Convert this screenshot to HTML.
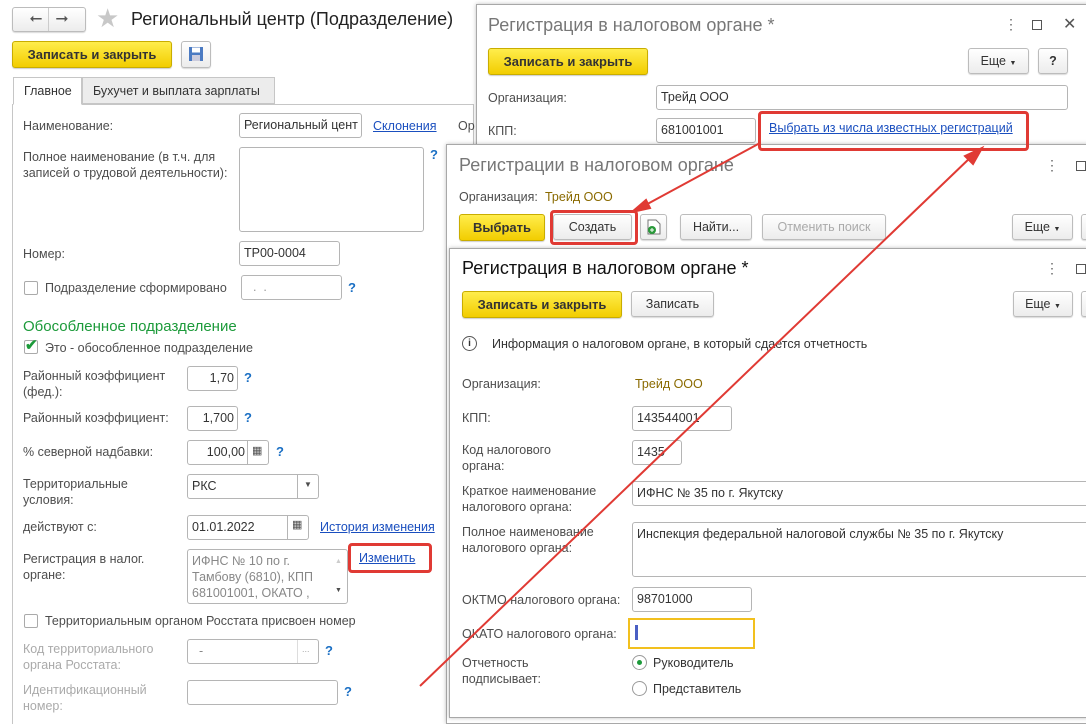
<!DOCTYPE html>
<html><head><meta charset="utf-8"><style>
*{box-sizing:border-box;margin:0;padding:0}
body{width:1086px;height:713px;overflow:hidden;background:#fff;position:relative;font-family:"Liberation Sans",Arial,sans-serif;font-size:12.5px;color:#4d4d4d}
div,span,a{position:absolute;white-space:nowrap}
.f{border:1px solid #b5b5b5;border-radius:3px;background:#fff;color:#333;padding:0 0 0 4px;height:25px;line-height:23px}
.b{border:1px solid #bcbcbc;border-radius:3px;background:linear-gradient(#fff,#ececec);color:#333;text-align:center;height:26px;line-height:24px;box-shadow:0 1px 1px rgba(0,0,0,.15)}
.y{border:1px solid #c9ad00;border-radius:3px;background:linear-gradient(#ffed4c,#f2cd00);color:#333;font-weight:bold;text-align:center;height:27px;line-height:25px;box-shadow:0 1px 1px rgba(0,0,0,.2)}
.q{color:#1a6fc4;font-weight:bold;font-size:13px}
.l{color:#1a4fbf;text-decoration:underline}
.w{background:#fff;border:1px solid #a8a8a8;box-shadow:0 0 4px rgba(0,0,0,.25)}
.g{color:#aaa}
.cb{width:14px;height:14px;border:1px solid #aaa;border-radius:2px;background:#fff}
.rb{width:15px;height:15px;border:1px solid #999;border-radius:50%;background:#fff}
.red{border:3px solid #e03a34;border-radius:4px}
</style></head><body>

<!-- main window -->
<div class="b" style="left:12px;top:7px;width:74px;height:25px;font-size:16px;line-height:22px;color:#555">⭠&nbsp;&nbsp;&nbsp;⭢</div>
<div style="left:48px;top:8px;width:1px;height:23px;background:#ccc"></div>
<div style="left:96px;top:3px;font-size:26px;color:#c8c8c8">★</div>
<div style="left:131px;top:9px;font-size:18px;color:#222">Региональный центр (Подразделение)</div>
<div class="y" style="left:12px;top:41px;width:160px;font-size:13px">Записать и закрыть</div>
<div class="b" style="left:181px;top:41px;width:30px;height:27px"><svg width="16" height="16" viewBox="0 0 16 16" style="position:absolute;left:6px;top:4px"><rect x="1" y="1" width="14" height="14" fill="#4b7ac2"/><rect x="4" y="1.5" width="8" height="5" fill="#fff"/><rect x="4" y="9" width="8" height="6" fill="#ccd"/></svg></div>
<div style="left:12px;top:104px;width:462px;height:620px;border:1px solid #c6c6c6;border-bottom:none"></div>
<div style="left:13px;top:77px;width:69px;height:28px;border:1px solid #c6c6c6;border-bottom:1px solid #fff;background:#fff;padding:6px 0 0 10px;color:#333">Главное</div>
<div style="left:82px;top:77px;width:193px;height:27px;border:1px solid #c6c6c6;background:#ececec;padding:6px 0 0 10px;color:#333">Бухучет и выплата зарплаты</div>

<div style="left:23px;top:119px">Наименование:</div>
<div class="f" style="left:239px;top:113px;width:123px;overflow:hidden">Региональный цент</div>
<a class="l" style="left:373px;top:119px">Склонения</a>
<div style="left:458px;top:119px">Ор</div>
<div style="left:23px;top:149px;line-height:16px">Полное наименование (в т.ч. для<br>записей о трудовой деятельности):</div>
<div class="f" style="left:239px;top:147px;width:185px;height:85px"></div>
<div class="q" style="left:430px;top:147px">?</div>
<div style="left:23px;top:247px">Номер:</div>
<div class="f" style="left:239px;top:241px;width:101px">ТР00-0004</div>
<div class="cb" style="left:24px;top:281px"></div>
<div style="left:45px;top:281px">Подразделение сформировано</div>
<div class="f" style="left:241px;top:275px;width:101px;color:#999">&nbsp;&nbsp;.&nbsp;&nbsp;.</div>
<div class="q" style="left:348px;top:280px">?</div>

<div style="left:23px;top:318px;font-size:15px;color:#1c9a3a">Обособленное подразделение</div>
<div class="cb" style="left:24px;top:340px"></div>
<div style="left:25px;top:336px;color:#1c9a3a;font-size:15px;font-weight:bold">✔</div>
<div style="left:45px;top:341px">Это - обособленное подразделение</div>
<div style="left:23px;top:368px;line-height:16px">Районный коэффициент<br>(фед.):</div>
<div class="f" style="left:187px;top:366px;width:51px;text-align:right;padding-right:3px">1,70</div>
<div class="q" style="left:244px;top:370px">?</div>
<div style="left:23px;top:411px">Районный коэффициент:</div>
<div class="f" style="left:187px;top:406px;width:51px;text-align:right;padding-right:3px">1,700</div>
<div class="q" style="left:244px;top:410px">?</div>
<div style="left:23px;top:445px">% северной надбавки:</div>
<div class="f" style="left:187px;top:440px;width:82px;padding-right:23px;text-align:right">100,00</div>
<div style="left:247px;top:441px;width:1px;height:23px;background:#b5b5b5"></div>
<div style="left:252px;top:444px;font-size:11px">▦</div>
<div class="q" style="left:276px;top:444px">?</div>
<div style="left:23px;top:476px;line-height:16px">Территориальные<br>условия:</div>
<div class="f" style="left:187px;top:474px;width:132px">РКС</div>
<div style="left:297px;top:475px;width:1px;height:23px;background:#b5b5b5"></div>
<div style="left:304px;top:480px;font-size:8px">▼</div>
<div style="left:23px;top:520px">действуют с:</div>
<div class="f" style="left:187px;top:515px;width:122px">01.01.2022</div>
<div style="left:287px;top:516px;width:1px;height:23px;background:#b5b5b5"></div>
<div style="left:292px;top:518px;font-size:11px">▦</div>
<a class="l" style="left:320px;top:520px">История изменения</a>
<div style="left:23px;top:551px;line-height:16px">Регистрация в налог.<br>органе:</div>
<div class="f" style="left:187px;top:549px;width:161px;height:55px;line-height:16px;padding-top:3px;color:#888">ИФНС № 10 по г.<br>Тамбову (6810), КПП<br>681001001, ОКАТО ,</div>
<div style="left:335px;top:558px;font-size:7px;color:#ccc">▲</div>
<div style="left:335px;top:587px;font-size:7px">▼</div>
<a class="l" style="left:359px;top:551px">Изменить</a>
<div class="cb" style="left:24px;top:614px"></div>
<div style="left:45px;top:614px">Территориальным органом Росстата присвоен номер</div>
<div class="g" style="left:23px;top:641px;line-height:16px">Код территориального<br>органа Росстата:</div>
<div class="f" style="left:187px;top:639px;width:132px;color:#888">&nbsp;&nbsp;-</div>
<div style="left:297px;top:640px;width:1px;height:23px;background:#ddd"></div>
<div class="g" style="left:302px;top:644px;font-size:9px">...</div>
<div class="q" style="left:325px;top:643px">?</div>
<div class="g" style="left:23px;top:682px;line-height:16px">Идентификационный<br>номер:</div>
<div class="f" style="left:187px;top:680px;width:151px"></div>
<div class="q" style="left:344px;top:684px">?</div>

<!-- window 2 -->
<div class="w" style="left:476px;top:4px;width:620px;height:150px"></div>
<div style="left:488px;top:15px;font-size:18px;color:#777">Регистрация в налоговом органе *</div>
<div style="left:1004px;top:16px;font-size:14px;color:#666">⋮</div>
<div style="left:1032px;top:20px;width:10px;height:10px;border:1px solid #555"></div>
<div style="left:1063px;top:14px;font-size:16px;color:#555">✕</div>
<div class="y" style="left:488px;top:48px;width:160px;font-size:13px">Записать и закрыть</div>
<div class="b" style="left:968px;top:48px;width:61px">Еще <span style="position:static;font-size:7px">▼</span></div>
<div class="b" style="left:1038px;top:48px;width:30px;font-weight:bold">?</div>
<div style="left:488px;top:91px">Организация:</div>
<div class="f" style="left:656px;top:85px;width:412px;color:#333">Трейд ООО</div>
<div style="left:488px;top:124px">КПП:</div>
<div class="f" style="left:656px;top:118px;width:100px;color:#333">681001001</div>
<a class="l" style="left:769px;top:121px">Выбрать из числа известных регистраций</a>

<!-- window 3 -->
<div class="w" style="left:446px;top:144px;width:650px;height:580px"></div>
<div style="left:459px;top:155px;font-size:18px;color:#777">Регистрации в налоговом органе</div>
<div style="left:1045px;top:157px;font-size:14px;color:#666">⋮</div>
<div style="left:1076px;top:161px;width:10px;height:10px;border:1px solid #555"></div>
<div style="left:459px;top:190px">Организация:</div>
<div style="left:545px;top:190px;color:#8a6a00">Трейд ООО</div>
<div class="y" style="left:459px;top:214px;width:86px;font-size:13px">Выбрать</div>
<div class="b" style="left:553px;top:214px;width:79px">Создать</div>
<div class="b" style="left:640px;top:214px;width:27px"><svg width="14" height="16" viewBox="0 0 14 16" style="position:absolute;left:6px;top:4px"><path d="M1 1h8l4 4v10H1z" fill="#fff" stroke="#777"/><circle cx="5" cy="11" r="4" fill="#2a9a3a"/><path d="M3 11h4M5 9v4" stroke="#fff"/></svg></div>
<div class="b" style="left:680px;top:214px;width:72px">Найти...</div>
<div class="b" style="left:762px;top:214px;width:124px;color:#aaa">Отменить поиск</div>
<div class="b" style="left:1012px;top:214px;width:61px">Еще <span style="position:static;font-size:7px">▼</span></div>
<div class="b" style="left:1081px;top:214px;width:20px"></div>

<!-- window 4 -->
<div class="w" style="left:449px;top:248px;width:650px;height:470px"></div>
<div style="left:462px;top:258px;font-size:18px;color:#111">Регистрация в налоговом органе *</div>
<div style="left:1045px;top:260px;font-size:14px;color:#666">⋮</div>
<div style="left:1076px;top:264px;width:10px;height:10px;border:1px solid #555"></div>
<div class="y" style="left:462px;top:291px;width:160px;font-size:13px">Записать и закрыть</div>
<div class="b" style="left:631px;top:291px;width:83px">Записать</div>
<div class="b" style="left:1013px;top:291px;width:60px">Еще <span style="position:static;font-size:7px">▼</span></div>
<div class="b" style="left:1081px;top:291px;width:20px"></div>
<div class="rb" style="left:462px;top:336px;border-color:#555;font-size:10px;font-weight:bold;text-align:center;line-height:13px;color:#333">i</div>
<div style="left:492px;top:337px;color:#333">Информация о налоговом органе, в который сдается отчетность</div>
<div style="left:462px;top:377px">Организация:</div>
<div style="left:635px;top:377px;color:#8a6a00">Трейд ООО</div>
<div style="left:462px;top:411px">КПП:</div>
<div class="f" style="left:632px;top:406px;width:100px">143544001</div>
<div style="left:462px;top:442px;line-height:16px">Код налогового<br>органа:</div>
<div class="f" style="left:632px;top:440px;width:50px">1435</div>
<div style="left:462px;top:483px;line-height:16px">Краткое наименование<br>налогового органа:</div>
<div class="f" style="left:632px;top:481px;width:470px">ИФНС № 35 по г. Якутску</div>
<div style="left:462px;top:524px;line-height:16px">Полное наименование<br>налогового органа:</div>
<div class="f" style="left:632px;top:522px;width:470px;height:55px">Инспекция федеральной налоговой службы № 35 по г. Якутску</div>
<div style="left:462px;top:593px">ОКТМО налогового органа:</div>
<div class="f" style="left:632px;top:587px;width:120px">98701000</div>
<div style="left:462px;top:627px">ОКАТО налогового органа:</div>
<div style="left:628px;top:618px;width:127px;height:31px;border:2px solid #f2c01e"></div>
<div style="left:635px;top:625px;width:3px;height:15px;background:#4a5fc4"></div>
<div style="left:462px;top:655px;line-height:16px">Отчетность<br>подписывает:</div>
<div class="rb" style="left:632px;top:655px"></div>
<div style="left:637px;top:660px;width:5px;height:5px;border-radius:50%;background:#1c9a3a"></div>
<div style="left:653px;top:656px;color:#333">Руководитель</div>
<div class="rb" style="left:632px;top:681px"></div>
<div style="left:653px;top:682px;color:#333">Представитель</div>

<!-- red annotations -->
<div class="red" style="left:758px;top:111px;width:271px;height:40px"></div>
<div class="red" style="left:550px;top:210px;width:88px;height:35px"></div>
<div class="red" style="left:348px;top:543px;width:84px;height:30px"></div>
<svg width="1086" height="713" style="position:absolute;left:0;top:0">
<g stroke="#e03a34" stroke-width="2" fill="#e03a34">
<line x1="760" y1="143" x2="640" y2="208"/>
<path d="M632 212 L646 200 L650 208 Z"/>
<line x1="420" y1="686" x2="972" y2="156"/>
<path d="M982 148 L965 156 L973 164 Z"/>
</g></svg>
</body></html>
